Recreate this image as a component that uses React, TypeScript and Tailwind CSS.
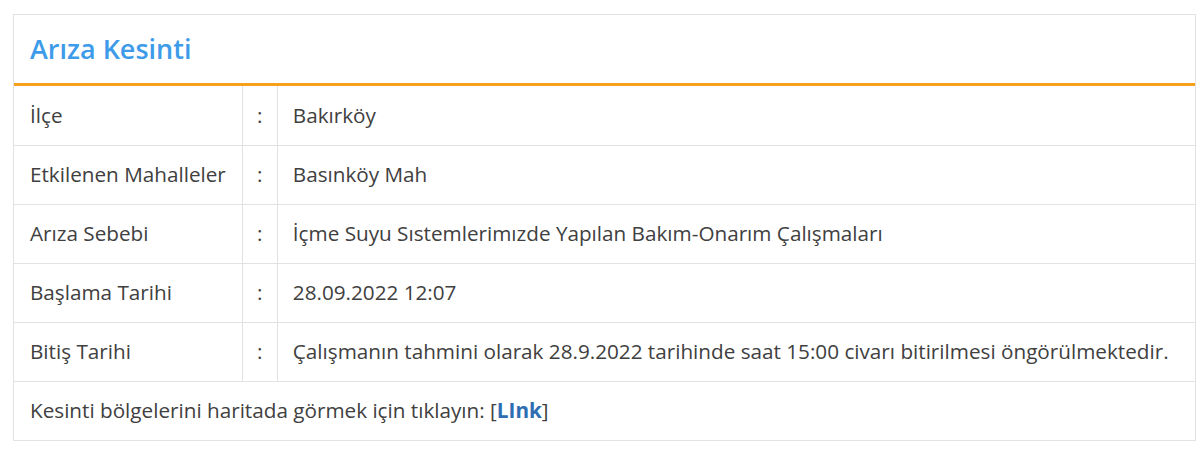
export default function App() {
    const rows = [
        { label: "İlçe", value: "Bakırköy" },
        { label: "Etkilenen Mahalleler", value: "Basınköy Mah" },
        { label: "Arıza Sebebi", value: "İçme Suyu Sıstemlerimızde Yapılan Bakım-Onarım Çalışmaları" },
        { label: "Başlama Tarihi", value: "28.09.2022 12:07" },
        { label: "Bitiş Tarihi", value: "Çalışmanın tahmini olarak 28.9.2022 tarihinde saat 15:00 civarı bitirilmesi öngörülmektedir." },
    ];

    return (
        <div className="min-h-screen bg-white pt-[14px] pl-[13px] pr-[4px] font-['Open_Sans',sans-serif] text-[#404040]">
            <div className="w-[1183px] border border-[#e2e2e2]">
                {/* Header */}
                <div className="h-[71px] flex items-center px-[16px] border-b-[3px] border-[#f5a11c]">
                    <h2 className="text-[27px] font-semibold text-[#3d9be9] leading-none pb-[2px]">Arıza Kesinti</h2>
                </div>

                {/* Rows */}
                <table className="w-full border-collapse text-[20.7px]">
                    <tbody>
                        {rows.map((r, i) => (
                            <tr key={i} className="h-[59px] border-b border-[#e2e2e2]">
                                <td className="w-[228px] px-[16px] border-r border-[#e2e2e2] whitespace-nowrap">{r.label}</td>
                                <td className="w-[35px] text-center border-r border-[#e2e2e2]">:</td>
                                <td className="pl-[15px] pr-[8px] whitespace-nowrap">{r.value}</td>
                            </tr>
                        ))}
                        <tr className="h-[59px]">
                            <td colSpan={3} className="px-[16px]">
                                Kesinti bölgelerini haritada görmek için tıklayın: [<a href="#" className="font-bold text-[#2f6db3]">LInk</a>]
                            </td>
                        </tr>
                    </tbody>
                </table>
            </div>
        </div>
    );
}
